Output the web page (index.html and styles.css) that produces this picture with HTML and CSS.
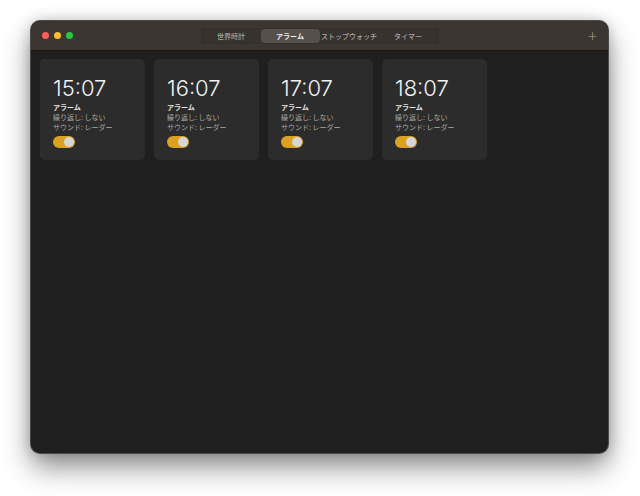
FILE: index.html
```html
<!DOCTYPE html>
<html lang="ja">
<head>
    <meta charset="UTF-8" />
    <title>アラーム</title>
    <link rel="stylesheet" href="styles.css">
</head>
<body>
    <div class="ventana">
        <div class="barra">
            <div class="semaforo">
                <span class="luz roja"></span>
                <span class="luz amarilla"></span>
                <span class="luz verde"></span>
            </div>
            <div class="pestanas">
                <span class="pestana">世界時計</span>
                <span class="pestana activa">アラーム</span>
                <span class="pestana">ストップウォッチ</span>
                <span class="pestana">タイマー</span>
            </div>
            <div class="mas">+</div>
        </div>

        <div class="contenido">
            <div class="tarjeta">
                <div class="hora">15:07</div>
                <div class="nombre">アラーム</div>
                <div class="detalle">繰り返し: しない</div>
                <div class="detalle">サウンド: レーダー</div>
                <span class="interruptor"></span>
            </div>
            <div class="tarjeta">
                <div class="hora">16:07</div>
                <div class="nombre">アラーム</div>
                <div class="detalle">繰り返し: しない</div>
                <div class="detalle">サウンド: レーダー</div>
                <span class="interruptor"></span>
            </div>
            <div class="tarjeta">
                <div class="hora">17:07</div>
                <div class="nombre">アラーム</div>
                <div class="detalle">繰り返し: しない</div>
                <div class="detalle">サウンド: レーダー</div>
                <span class="interruptor"></span>
            </div>
            <div class="tarjeta">
                <div class="hora">18:07</div>
                <div class="nombre">アラーム</div>
                <div class="detalle">繰り返し: しない</div>
                <div class="detalle">サウンド: レーダー</div>
                <span class="interruptor"></span>
            </div>
        </div>
    </div>
</body>
</html>
```

FILE: styles.css
```css
html {
    background-color: #ffffff;
}

body {
    margin: 0;
    padding: 21px 0 0 31px;
    min-height: 496px;
    box-sizing: border-box;
    font-family: "Noto Sans CJK JP", "Noto Sans", sans-serif;
}

.ventana {
    width: 577px;
    height: 432px;
    background-color: #1f1f1f;
    border-radius: 9px;
    overflow: hidden;
    box-shadow: 0 0 0 1px #4a4a4a, 0 14px 28px rgba(0,0,0,0.45), 0 0 14px rgba(0,0,0,0.2);
}

.barra {
    height: 29px;
    background-color: #3b3632;
    border-bottom: 1px solid #161616;
    display: grid;
    grid-template-columns: 1fr auto 1fr;
    align-items: center;
}

.semaforo {
    display: flex;
    gap: 5px;
    padding-left: 11px;
}

.luz {
    width: 7px;
    height: 7px;
    border-radius: 50%;
}

.roja { background-color: #fe5f57; }
.amarilla { background-color: #febc2e; }
.verde { background-color: #28c840; }

.pestanas {
    display: flex;
    height: 16px;
    border: 1px solid #332f2c;
    background-color: #37322e;
    border-radius: 4px;
    box-sizing: border-box;
}

.pestana {
    width: 59px;
    display: flex;
    align-items: center;
    justify-content: center;
    font-size: 7px;
    font-weight: 500;
    color: #aaa49e;
    border-radius: 4px;
}

.pestana.activa {
    background-color: #55504b;
    color: #ececec;
    font-weight: 600;
}

.mas {
    justify-self: end;
    padding-right: 10px;
    color: #a9a39d;
    font-family: "DejaVu Sans", sans-serif;
    font-size: 13px;
    font-weight: 300;
    line-height: 1;
}

.contenido {
    display: flex;
    gap: 9px;
    padding: 8px 9px;
}

.tarjeta {
    width: 105px;
    height: 101px;
    box-sizing: border-box;
    background-color: #2c2c2c;
    border-radius: 5px;
    padding: 16px 0 0 13px;
}

.hora {
    font-family: "Inter", sans-serif;
    font-weight: 300;
    font-size: 22px;
    line-height: 26px;
    color: #f2f2f2;
    margin-bottom: 1px;
}

.nombre {
    font-size: 7px;
    line-height: 10px;
    font-weight: 700;
    color: #e6e6e6;
}

.detalle {
    font-size: 7px;
    line-height: 10px;
    color: #a8a8a8;
}

.interruptor {
    display: block;
    position: relative;
    width: 22px;
    height: 12px;
    margin-top: 4px;
    border-radius: 6px;
    background-color: #dba121;
}

.interruptor::after {
    content: "";
    position: absolute;
    right: 1px;
    top: 1px;
    width: 10px;
    height: 10px;
    border-radius: 50%;
    background-color: #d6d6d6;
}
```
